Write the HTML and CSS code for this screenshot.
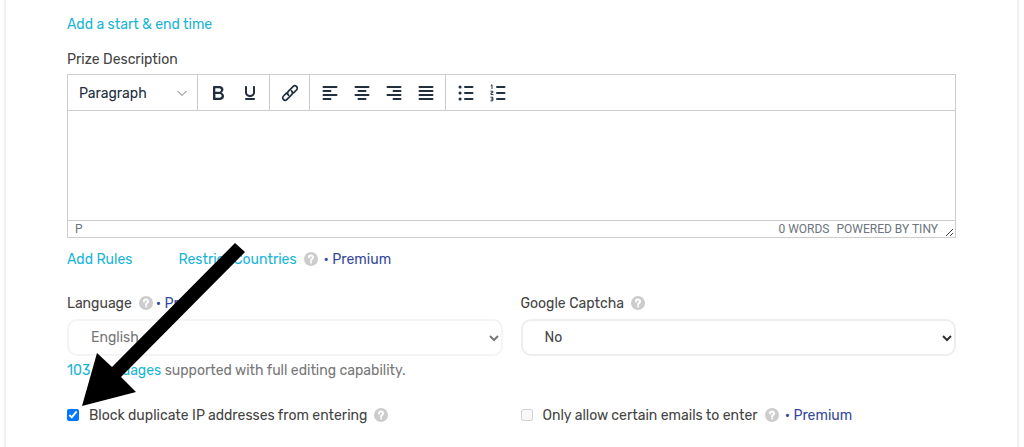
FILE: index.html
```html
<!DOCTYPE html>
<html lang="en">
<head>
  <meta charset="UTF-8" />
  <meta name="viewport" content="width=device-width, initial-scale=1" />
  <title>Prize Settings</title>
  <link rel="stylesheet" href="styles.css">
</head>
<body>
  <form class="card">
    <a class="link time-link" href="#">Add a start &amp; end time</a>

    <label class="field-label" for="description">Prize Description</label>
    <div class="editor">
      <div class="toolbar">
        <div class="group format">
          <select class="format-select" aria-label="Text format">
            <option>Paragraph</option>
          </select>
          <svg class="format-chevron" viewBox="0 0 10 10"><path d="M.5 3L5 7.500 9.500 3"/></svg>
        </div>
        <div class="group">
          <button type="button" class="tool" aria-label="Bold">
            <svg viewBox="0 0 24 24"><path d="M7.8 19c-.3 0-.5 0-.6-.2l-.2-.5V5.7c0-.2 0-.4.2-.5l.6-.2h5c1.5 0 2.7.3 3.5 1 .7.6 1.100 1.400 1.100 2.500a3 3 0 0 1-.6 1.900c-.4.6-1 1-1.600 1.200.4.1.9.3 1.300.6s.8.7 1 1.200c.4.4.5 1 .5 1.600 0 1.300-.4 2.300-1.300 3-.8.7-2.100 1-3.800 1H7.800zm5-8.300c.6 0 1.200-.1 1.600-.5.4-.3.6-.7.6-1.300 0-1.100-.8-1.700-2.300-1.700H9.300v3.500h3.400zm.5 6c.7 0 1.300-.1 1.700-.4.4-.4.6-.9.6-1.500s-.2-1-.7-1.400c-.4-.3-1-.4-2-.4H9.400v3.800h4z" fill-rule="evenodd"/></svg>
          </button>
          <button type="button" class="tool" aria-label="Underline">
            <svg viewBox="0 0 24 24"><path d="M16 5c.6 0 1 .4 1 1v5.500a4 4 0 0 1-.4 1.800l-1 1.400a5.300 5.300 0 0 1-5.500 1 5 5 0 0 1-1.600-1c-.5-.4-.8-.9-1.100-1.400a4 4 0 0 1-.4-1.800V6c0-.6.4-1 1-1s1 .4 1 1v5.500c0 .3 0 .6.2 1l.6.7a3.300 3.300 0 0 0 2.200.8 3.400 3.400 0 0 0 2.200-.8c.3-.2.4-.5.6-.8l.2-.9V6c0-.6.400-1 1-1zM8 17h8c.6 0 1 .4 1 1s-.4 1-1 1H8a1 1 0 0 1 0-2z" fill-rule="evenodd"/></svg>
          </button>
        </div>
        <div class="group">
          <button type="button" class="tool" aria-label="Insert link">
            <svg class="stroked link-icon" viewBox="0 0 24 24"><path d="M10.500 14.200c-1.300-1.300-1.300-2.800-.2-3.900l4.700-4.700c1.100-1.100 2.500-1 3.500-.1s1.100 2.400 0 3.500l-2.900 2.900M13.500 9.800c1.300 1.300 1.300 2.800.2 3.900L9 18.400c-1.100 1.100-2.500 1-3.500.1s-1.100-2.400 0-3.500l2.900-2.900"/></svg>
          </button>
        </div>
        <div class="group">
          <button type="button" class="tool" aria-label="Align left">
            <svg class="stroked" viewBox="0 0 24 24"><path d="M5.500 6h13M5.500 10h7M5.500 14h13M5.500 18h7"/></svg>
          </button>
          <button type="button" class="tool" aria-label="Align center">
            <svg class="stroked" viewBox="0 0 24 24"><path d="M5.500 6h13M8.500 10h7M5.500 14h13M8.500 18h7"/></svg>
          </button>
          <button type="button" class="tool" aria-label="Align right">
            <svg class="stroked" viewBox="0 0 24 24"><path d="M5.500 6h13M11.500 10h7M5.500 14h13M11.500 18h7"/></svg>
          </button>
          <button type="button" class="tool" aria-label="Justify">
            <svg class="stroked" viewBox="0 0 24 24"><path d="M5.500 6h13M5.500 10h13M5.500 14h13M5.500 18h13"/></svg>
          </button>
        </div>
        <div class="group last">
          <button type="button" class="tool" aria-label="Bullet list">
            <svg class="stroked" viewBox="0 0 24 24"><path d="M11 6h7.500M11 12h7.500M11 18h7.500"/><path class="dots" d="M6 6h.1M6 12h.1M6 18h.1"/></svg>
          </button>
          <button type="button" class="tool" aria-label="Numbered list">
            <svg class="stroked" viewBox="0 0 24 24"><path d="M11 6h7.500M11 12h7.500M11 18h7.500"/><path class="digits" d="M5 4.500l1-.8v4M4.800 10.200h2v1.600h-1.800v1.800h2M4.800 16.200h2v3.600h-2M5.300 18h1.500"/></svg>
          </button>
        </div>
      </div>
      <textarea class="editor-body" id="description"></textarea>
      <div class="statusbar">
        <span>P</span>
        <span class="words">0 WORDS</span>
        <span>POWERED BY TINY</span>
        <svg class="resize" viewBox="0 0 10 10"><path d="M1 9l7-7M5 9l3-3"/></svg>
      </div>
    </div>

    <div class="links">
      <a class="link rules" href="#">Add Rules</a>
      <a class="link" href="#">Restrict Countries</a>
      <svg class="help" viewBox="0 0 14 14"><circle cx="7" cy="7" r="7"/><path d="M4.900 5.400c.1-2.600 4.300-2.500 4.200 0 0 1.500-2 1.500-2 3M7.100 10.500v.1"/></svg>
      <a class="premium" href="#">• Premium</a>
    </div>

    <div class="columns">
      <div class="field">
        <div class="label-row">
          <label for="language">Language</label>
          <svg class="help" viewBox="0 0 14 14"><circle cx="7" cy="7" r="7"/><path d="M4.900 5.400c.1-2.600 4.300-2.500 4.200 0 0 1.500-2 1.500-2 3M7.100 10.500v.1"/></svg>
          <a class="premium" href="#">• Pro</a>
        </div>
        <div class="select-wrap">
          <select class="select" id="language" disabled>
            <option>English</option>
          </select>
          <svg class="chevron muted" viewBox="0 0 10 10"><path d="M1 3l4 4 4-4"/></svg>
        </div>
        <p class="hint"><a class="link" href="#">103 languages</a> supported with full editing capability.</p>
      </div>
      <div class="field">
        <div class="label-row">
          <label for="captcha">Google Captcha</label>
          <svg class="help" viewBox="0 0 14 14"><circle cx="7" cy="7" r="7"/><path d="M4.900 5.400c.1-2.600 4.300-2.500 4.200 0 0 1.500-2 1.500-2 3M7.100 10.500v.1"/></svg>
        </div>
        <div class="select-wrap">
          <select class="select" id="captcha">
            <option>No</option>
            <option>Yes</option>
          </select>
          <svg class="chevron" viewBox="0 0 10 10"><path d="M1 3l4 4 4-4"/></svg>
        </div>
      </div>
    </div>

    <div class="columns checks">
      <div class="check">
        <input type="checkbox" id="block-ip" checked>
        <label for="block-ip">Block duplicate IP addresses from entering</label>
        <svg class="help" viewBox="0 0 14 14"><circle cx="7" cy="7" r="7"/><path d="M4.900 5.400c.1-2.600 4.300-2.500 4.200 0 0 1.500-2 1.500-2 3M7.100 10.500v.1"/></svg>
      </div>
      <div class="check">
        <input type="checkbox" id="only-emails" disabled>
        <label for="only-emails">Only allow certain emails to enter</label>
        <svg class="help" viewBox="0 0 14 14"><circle cx="7" cy="7" r="7"/><path d="M4.900 5.400c.1-2.600 4.300-2.500 4.200 0 0 1.500-2 1.500-2 3M7.100 10.500v.1"/></svg>
        <a class="premium" href="#">• Premium</a>
      </div>
    </div>

    <!-- pointer to the duplicate IP setting -->
    <svg class="arrow" viewBox="0 0 164 164"><path d="M153 1l10 9L39 135l15 15L0 164l15-53 15 14z"/></svg>
  </form>
</body>
</html>
```
FILE: styles.css
```css
* {
  box-sizing: border-box;
}

body {
  margin: 0;
  background: #fff;
  color: #444;
  font-family: Rubik, Roboto, sans-serif;
  font-size: 14px;
  line-height: 20px;
}

a {
  text-decoration: none;
}

.card {
  position: relative;
  margin: 0 5px 0 4px;
  padding: 15px 61px 22px;
  border: solid #f0f0f0;
  border-width: 0 2px;
}

.link {
  color: #1ab5d5;
}

.premium {
  color: #34499c;
}

.time-link,
.field-label {
  display: block;
}

.field-label {
  margin: 15px 0 4px;
}

/* editor */
.editor {
  border: 1px solid #ccc;
  color: #222f3e;
}

.toolbar {
  display: flex;
  height: 36px;
  border-bottom: 1px solid #ccc;
}

.group {
  display: flex;
  align-items: center;
  gap: 8px;
  padding: 0 7px 0 8px;
  border-right: 1px solid #ccc;
}

.last {
  border-right: none;
}

.format {
  position: relative;
  width: 130px;
  padding: 0;
}

.format-select {
  appearance: none;
  width: 100%;
  height: 100%;
  padding: 2px 11px 0;
  border: none;
  background: none;
  color: inherit;
  font: inherit;
}

.format-chevron {
  position: absolute;
  right: 10px;
  width: 10px;
  pointer-events: none;
  fill: none;
  stroke: #777;
}

.tool {
  display: flex;
  width: 24px;
  height: 24px;
  padding: 0;
  border: none;
  background: none;
}

.tool svg {
  width: 24px;
  height: 24px;
  fill: #222f3e;
}

.tool .stroked {
  fill: none;
  stroke: #222f3e;
  stroke-width: 2;
  stroke-linecap: round;
}

.tool .link-icon {
  stroke-width: 1.7;
}

.tool .dots {
  stroke-width: 3;
}

.tool .digits {
  stroke-width: 1;
}

.editor-body {
  display: block;
  width: 100%;
  height: 109px;
  padding: 10px;
  border: none;
  outline: none;
  resize: none;
  font: inherit;
}

.statusbar {
  display: flex;
  align-items: center;
  gap: 7px;
  height: 17px;
  padding: 0 0 0 7px;
  border-top: 1px solid #ccc;
  color: #6c747d;
  font-family: Roboto, sans-serif;
  font-size: 12px;
}

.words {
  margin-left: auto;
}

.resize {
  align-self: flex-end;
  width: 10px;
  height: 10px;
  fill: none;
  stroke: #444;
}

/* options */
.links {
  display: flex;
  align-items: center;
  margin-top: 12px;
}

.rules {
  margin-right: 46px;
}

.help {
  flex: none;
  width: 14px;
  height: 14px;
  margin: 0 6px 2px 7px;
  fill: #ccc;
}

.help path {
  fill: none;
  stroke: #fff;
  stroke-width: 2;
  stroke-linecap: round;
}

.columns {
  display: grid;
  grid-template-columns: 1fr 1fr;
  gap: 18px;
  margin-top: 24px;
}

.label-row,
.check {
  display: flex;
  align-items: center;
}

.label-row .help {
  margin-right: 3px;
}

.select-wrap {
  position: relative;
  margin-top: 5px;
}

.select {
  display: block;
  appearance: none;
  width: 100%;
  height: 37px;
  padding: 0 22px;
  border: 2px solid #eee;
  border-radius: 10px;
  background: #fff;
  color: #444;
  font: inherit;
  opacity: 1;
}

.select:disabled {
  border-color: #f4f4f4;
  color: #777;
}

.chevron {
  position: absolute;
  top: 14px;
  right: 4px;
  width: 10px;
  pointer-events: none;
  fill: none;
  stroke: #333;
  stroke-width: 2;
}

.muted {
  stroke: #777;
}

.hint {
  margin: 5px 0 0;
  color: #777;
}

.checks {
  margin-top: 25px;
}

.check input {
  width: 12px;
  height: 12px;
  margin: 0 10px 2px 0;
}

.arrow {
  position: absolute;
  top: 242px;
  left: 76px;
  width: 164px;
  height: 164px;
  pointer-events: none;
}
```
